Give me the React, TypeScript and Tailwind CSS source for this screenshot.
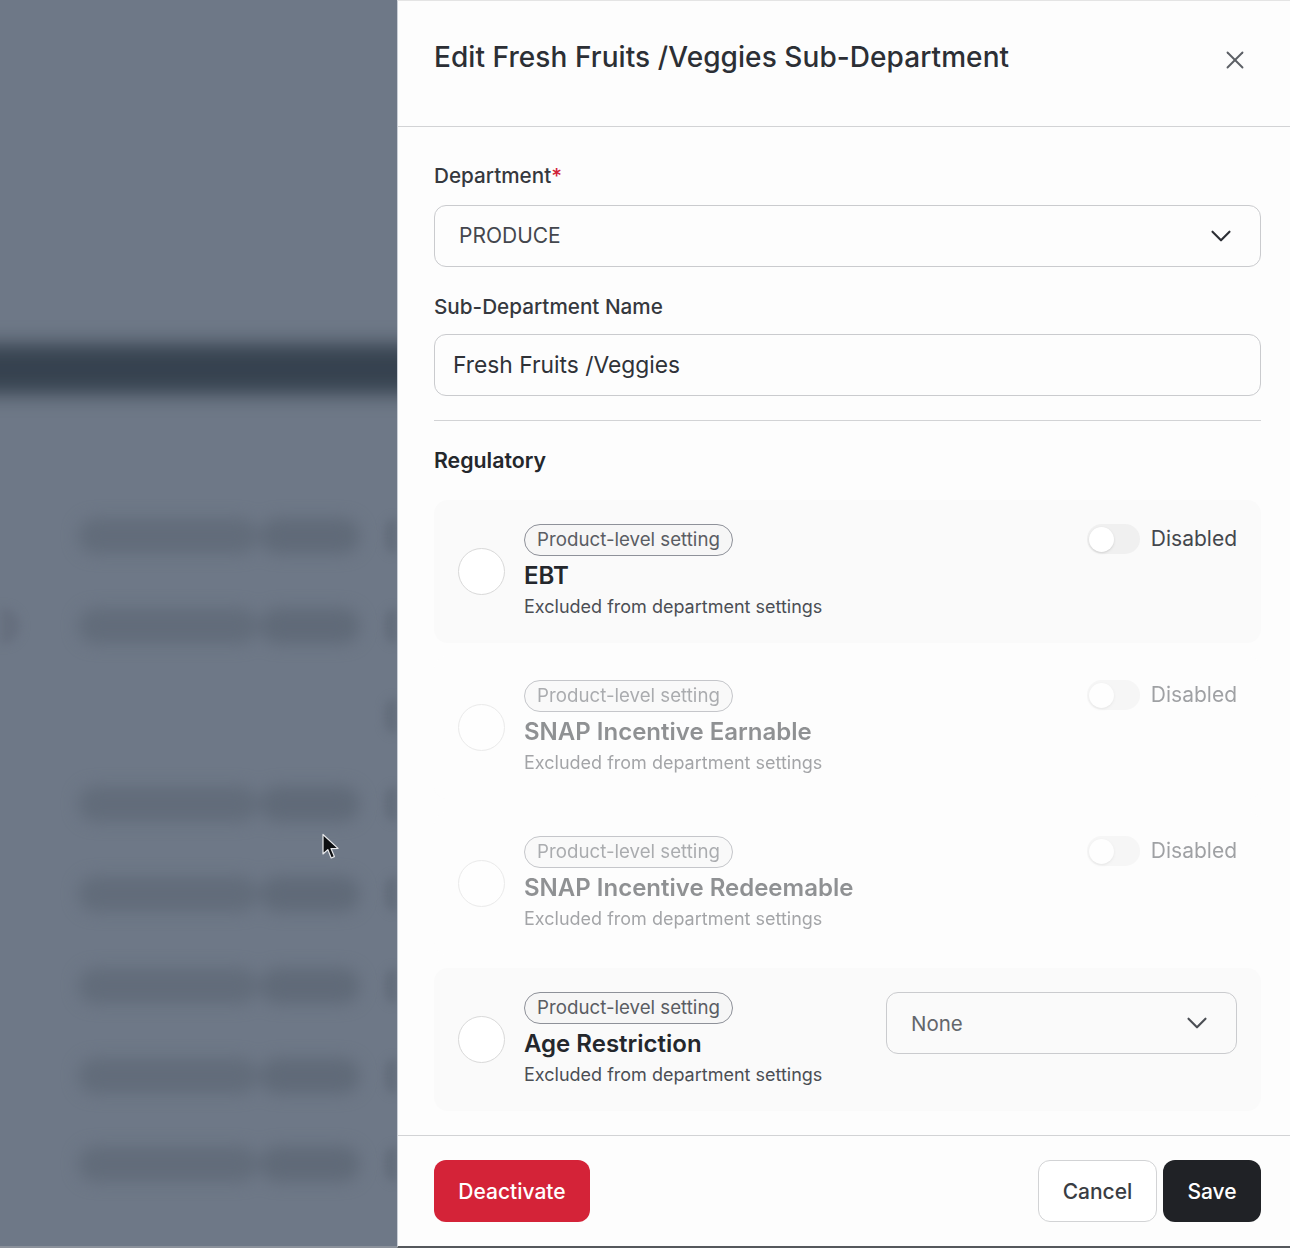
import { ChevronDown, X } from 'lucide-react';

const blurRows = [
  { mt: 'mt-[124px]', left: false, bar: true },
  { mt: 'mt-[54px]', left: true, bar: true },
  { mt: 'mt-[54px]', left: false, bar: false },
  { mt: 'mt-[52px]', left: false, bar: true },
  { mt: 'mt-[54px]', left: false, bar: true },
  { mt: 'mt-[56px]', left: false, bar: true },
  { mt: 'mt-[54px]', left: false, bar: true },
  { mt: 'mt-[52px]', left: false, bar: true },
];

function BlurRow({ mt, left, bar }: { mt: string; left: boolean; bar: boolean }) {
  return (
    <div className={`flex h-[36px] items-stretch justify-between ${mt}`}>
      <div className="w-[78px]">
        {left && <div className="h-full w-[20px] rounded-r-full bg-[#666f7e] blur-[5px]" />}
      </div>
      <div className="w-[282px]">
        {bar && (
          <div className="flex h-full gap-[2px] blur-[8px]">
            <div className="flex-1 rounded-full bg-[#626c7a]" />
            <div className="w-[100px] rounded-full bg-[#606a78]" />
          </div>
        )}
      </div>
      <div className="ml-[25px] w-[12px] rounded-l-full bg-[#626c7a] blur-[5px]" />
    </div>
  );
}

function RuleCard({ name, faded, children }: { name: string; faded?: boolean; children: React.ReactNode }) {
  return (
    <div className={`flex h-[143px] items-start rounded-[14px] pl-[24px] pr-[24px] pt-[24px] ${faded ? 'bg-[#fdfdfd] opacity-50' : 'bg-[#fafafa]'}`}>
      <div className="mr-[19px] mt-[24px] h-[47px] w-[47px] shrink-0 rounded-full border border-[#d9d9d9] bg-white" />
      <div className="flex-1">
        <div className="flex h-[32px] w-[209px] items-center justify-center rounded-full border border-[#8e9199] bg-[#f6f6f6] text-[18.7px] text-[#5a5d63]">
          Product-level setting
        </div>
        <div className="mt-[4px] text-[24px] font-semibold leading-[32px] text-[#24272c]">{name}</div>
        <div className="mt-[2px] text-[18px] leading-[26px] text-[#4b4e54]">Excluded from department settings</div>
      </div>
      {children}
    </div>
  );
}

function DisabledToggle() {
  return (
    <div className="flex items-start gap-[11px]">
      <div className="flex h-[30px] w-[53px] items-center rounded-full bg-[#f0f0f0] pl-[2px]">
        <div className="h-[25px] w-[25px] rounded-full bg-white shadow-sm" />
      </div>
      <span className="text-[21px] leading-[30px] text-[#44474d]">Disabled</span>
    </div>
  );
}

export default function App() {
  return (
    <div className="relative flex h-[1248px] w-[1290px] overflow-hidden bg-white font-[Inter,sans-serif]">
      {/* blurred page behind the drawer */}
      <div className="h-full w-[397px] shrink-0 overflow-hidden border-b-2 border-[#8b919b] bg-[#6e7887]">
        <div className="-mx-[30px] mt-[344px] h-[50px] bg-[#36424f] blur-[10px]" />
        {blurRows.map((r, i) => (
          <BlurRow key={i} mt={r.mt} left={r.left} bar={r.bar} />
        ))}
      </div>

      <div className="flex h-full flex-1 flex-col border-b-2 border-l border-t border-b-[#55585c] border-l-[#c9ced6] border-t-[#e4e4e4] bg-[#fdfdfd]">
        <div className="flex h-[126px] shrink-0 items-start justify-between border-b border-[#d2d3d5] pl-[36px] pr-[40px] pt-[36px]">
          <h1 className="text-[28px] font-medium leading-[40px] tracking-[0.07px] text-[#2c2f35]">Edit Fresh Fruits /Veggies Sub-Department</h1>
          <X className="mt-[8px] h-[30px] w-[30px] text-[#5d6066]" strokeWidth={1.5} />
        </div>

        <div className="flex-1 pl-[36px] pr-[29px]">
          <div className="mt-[35px] text-[20.7px] font-medium leading-[28px] text-[#35383e]">
            Department<span className="text-[#d22338]">*</span>
          </div>
          <div className="mt-[15px] flex h-[62px] items-center justify-between rounded-[12px] border border-[#cacbce] pl-[24px] pr-[22px]">
            <span className="text-[21px] text-[#44474d]">PRODUCE</span>
            <ChevronDown className="h-[34px] w-[34px] text-[#2c2f35]" strokeWidth={1.5} />
          </div>
          <div className="mt-[26px] text-[20.7px] font-medium leading-[28px] text-[#35383e]">Sub-Department Name</div>
          <div className="mt-[13px] flex h-[62px] items-center rounded-[12px] border border-[#cacbce] pl-[18px] text-[22.8px] text-[#2f3238]">
            Fresh Fruits /Veggies
          </div>
          <div className="mt-[24px] h-px bg-[#d2d3d5]" />
          <div className="mt-[25px] text-[21.3px] font-semibold leading-[28px] text-[#24272c]">Regulatory</div>

          <div className="mt-[26px] flex flex-col gap-[13px]">
            <RuleCard name="EBT"><DisabledToggle /></RuleCard>
            <RuleCard name="SNAP Incentive Earnable" faded><DisabledToggle /></RuleCard>
            <RuleCard name="SNAP Incentive Redeemable" faded><DisabledToggle /></RuleCard>
            <RuleCard name="Age Restriction">
              <div className="flex h-[62px] w-[351px] items-center justify-between rounded-[12px] border border-[#cacbce] pl-[24px] pr-[22px]">
                <span className="pt-[2px] text-[20.5px] text-[#63666c]">None</span>
                <ChevronDown className="h-[34px] w-[34px] text-[#4b4e54]" strokeWidth={1.5} />
              </div>
            </RuleCard>
          </div>
        </div>

        <div className="flex h-[111px] shrink-0 items-start justify-between border-t border-[#d2d3d5] pl-[36px] pr-[29px] pt-[24px]">
          <button className="h-[62px] w-[156px] rounded-[12px] bg-[#d42338] pt-[2px] text-[21px] font-medium text-white">Deactivate</button>
          <div className="flex gap-[6px]">
            <button className="h-[62px] w-[119px] rounded-[12px] border border-[#d2d3d5] bg-white pt-[2px] text-[21px] font-medium text-[#3a3d43]">Cancel</button>
            <button className="h-[62px] w-[98px] rounded-[12px] bg-[#202226] pt-[2px] text-[21px] font-medium text-white">Save</button>
          </div>
        </div>
      </div>

      {/* mouse pointer */}
      <svg className="absolute left-[321px] top-[833px]" width="20" height="28" viewBox="0 0 20 28">
        <path d="M2 1.5 L2 21 L6.8 16.6 L10.2 25 L13.4 23.6 L10 15.6 L17 15.4 Z" fill="#0d0f12" stroke="#e8e9ec" strokeWidth="1.2" strokeLinejoin="round" />
      </svg>
    </div>
  );
}
